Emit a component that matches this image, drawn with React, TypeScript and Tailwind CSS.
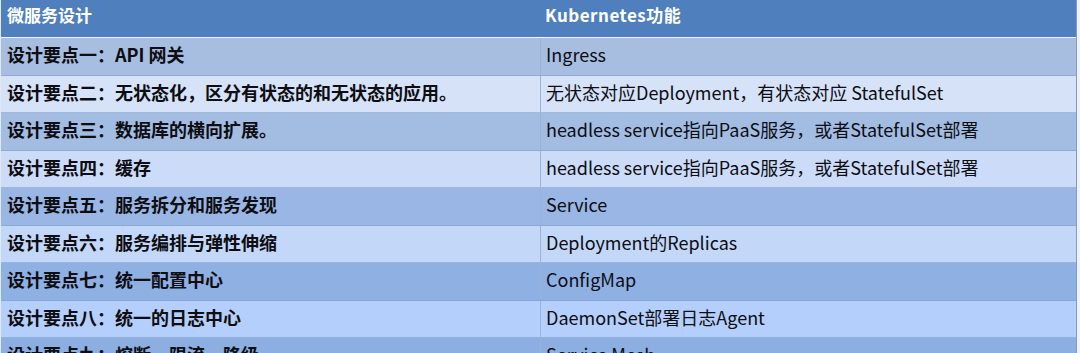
const rows: [string, string, string][] = [
  ['设计要点一：API 网关', 'Ingress', 'bg-[#a7bee1]'],
  ['设计要点二：无状态化，区分有状态的和无状态的应用。', '无状态对应Deployment，有状态对应 StatefulSet', 'bg-[#d5e2f7]'],
  ['设计要点三：数据库的横向扩展。', 'headless service指向PaaS服务，或者StatefulSet部署', 'bg-[#a2bce2]'],
  ['设计要点四：缓存', 'headless service指向PaaS服务，或者StatefulSet部署', 'bg-[#ccdcf8]'],
  ['设计要点五：服务拆分和服务发现', 'Service', 'bg-[#99b6e4]'],
  ['设计要点六：服务编排与弹性伸缩', 'Deployment的Replicas', 'bg-[#c3d7f9]'],
  ['设计要点七：统一配置中心', 'ConfigMap', 'bg-[#8fb0e3]'],
  ['设计要点八：统一的日志中心', 'DaemonSet部署日志Agent', 'bg-[#b4cffb]'],
  ['设计要点九：熔断、限流、降级', 'Service Mesh', 'bg-[#8caee0]'],
];

const font = { fontFamily: '"Noto Sans CJK SC", "Noto Sans", sans-serif' };

export default function App() {
  return (
    <div className="h-[353px] w-[1080px] overflow-hidden bg-[#eef2f8]" style={font}>
      <div className="w-[1077px] border-l border-l-[#dfe8f5] border-r border-r-[#8a9bb4]">
        <div className="grid h-[38px] grid-cols-[539px_1fr] border-b border-b-[#f4f8ff] bg-[#4f7fbd] text-[17px] font-bold leading-none text-white">
          <div className="pl-[6px] pt-[6px]">微服务设计</div>
          <div className="pl-[5px] pt-[6px] tracking-[0.5px]">Kubernetes功能</div>
        </div>
        {rows.map(([left, right, bg], i) => (
          <div
            key={i}
            className={`grid h-[37.5px] grid-cols-[539px_1fr] border-b border-b-[#7f9fcc]/60 text-[18px] leading-none text-[#0d0d12] ${bg}`}
          >
            <div className="pl-[6px] pt-[7px] font-bold">{left}</div>
            <div className="border-l border-l-[#9ab2d9] pl-[5px] pt-[7px]">{right}</div>
          </div>
        ))}
      </div>
    </div>
  );
}
